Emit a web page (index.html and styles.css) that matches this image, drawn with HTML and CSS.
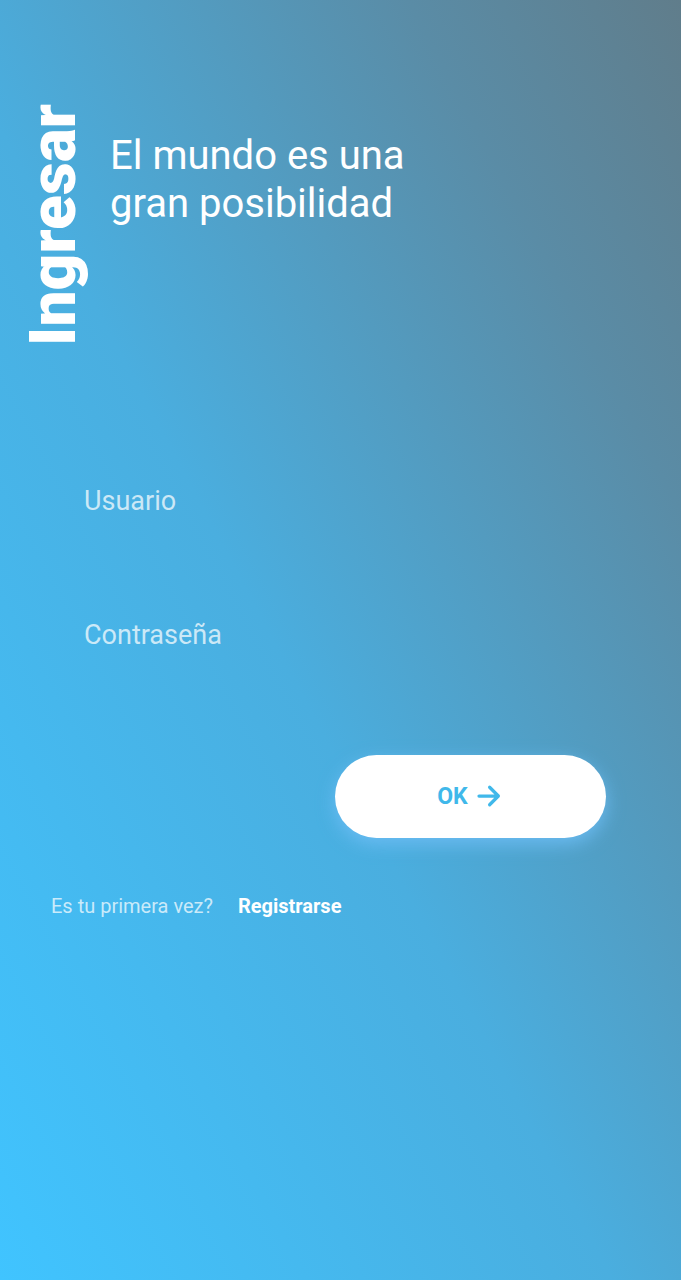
FILE: index.html
```html
<!DOCTYPE html>
<html lang="es">
<head>
<meta charset="utf-8">
<link rel="stylesheet" href="styles.css">
</head>
<body>
<main class="screen">
  <header class="hero">
    <h1 class="vertical">Ingresar</h1>
    <p class="tagline">El mundo es una<br>gran posibilidad</p>
  </header>
  <form class="form">
    <div class="field">Usuario</div>
    <div class="field">Contraseña</div>
    <div class="actions">
      <button type="button" class="ok">OK
        <svg class="arrow" width="30" height="30" viewBox="0 0 24 24"><path d="M4 12h15M12.5 5l7 7-7 7" fill="none" stroke="currentColor" stroke-width="2.6" stroke-linecap="round" stroke-linejoin="round"/></svg>
      </button>
    </div>
    <div class="signup">
      <span class="muted">Es tu primera vez?</span>
      <span class="link">Registrarse</span>
    </div>
  </form>
</main>
</body>
</html>
```
FILE: styles.css
```css
html, body {
  margin: 0;
  padding: 0;
}
body {
  font-family: Roboto, "Liberation Sans", sans-serif;
}
.screen {
  width: 681px;
  height: 1280px;
  box-sizing: border-box;
  background: linear-gradient(to top right, #40c4ff 0%, #4aaedf 45%, #5a8ca6 80%, #607d8b 100%);
  color: #fff;
  overflow: hidden;
}
.hero {
  display: flex;
  align-items: flex-start;
  padding: 104px 0 0 23px;
}
.vertical {
  margin: 0;
  writing-mode: vertical-rl;
  transform: rotate(180deg);
  font-size: 64px;
  font-weight: 900;
  line-height: 62px;
  letter-spacing: 0;
}
.tagline {
  margin: 28px 0 0 25px;
  font-size: 40px;
  line-height: 48px;
  font-weight: 400;
}
.form {
  padding: 140px 75px 0 84px;
}
.field {
  font-size: 27px;
  line-height: 30px;
  color: rgba(255, 255, 255, 0.72);
  height: 134px;
}
.actions {
  display: flex;
  justify-content: flex-end;
  margin-top: 1px;
}
.ok {
  width: 271px;
  height: 83px;
  border: none;
  border-radius: 42px;
  background: #fff;
  box-shadow: 0 6px 18px rgba(110, 190, 245, 0.9);
  color: #40b8ea;
  font-family: Roboto, "Liberation Sans", sans-serif;
  font-weight: 700;
  font-size: 23px;
  display: flex;
  align-items: center;
  justify-content: center;
  gap: 6px;
  padding: 0 0 0 -2px;
}
.arrow {
  display: block;
}
.signup {
  display: flex;
  gap: 25px;
  margin: 56px 0 0 -33px;
  font-size: 20px;
  line-height: 24px;
}
.muted {
  color: rgba(255, 255, 255, 0.72);
}
.link {
  font-weight: 700;
  color: #fff;
}
```
